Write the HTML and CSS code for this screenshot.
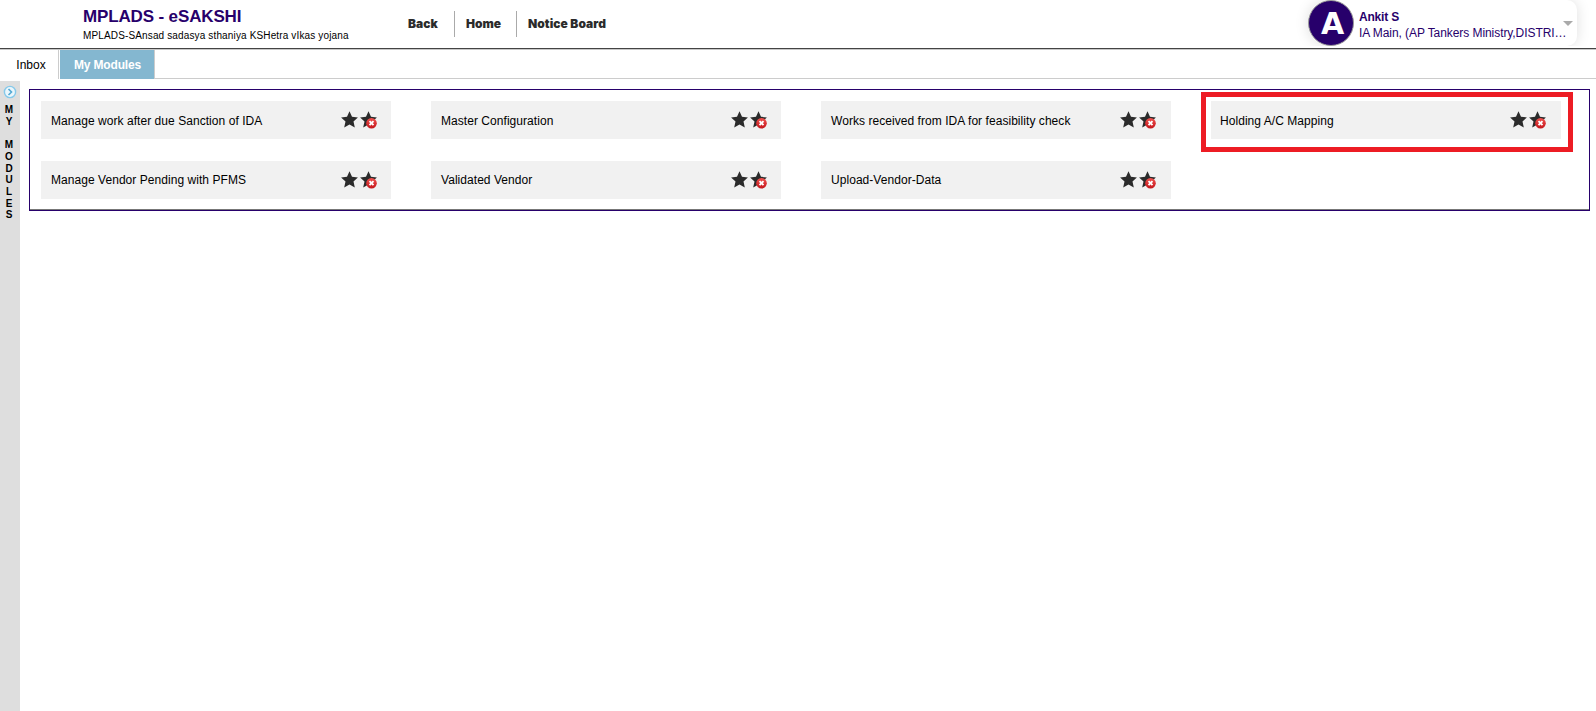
FILE: index.html
```html
<!DOCTYPE html>
<html lang="en">
<head>
<meta charset="utf-8">
<title>MPLADS - eSAKSHI</title>
<link rel="stylesheet" href="styles.css">
</head>
<body>
<svg class="defs" width="0" height="0">
  <defs>
    <linearGradient id="badge" x1="0" y1="0" x2="0" y2="1"><stop offset="0" stop-color="#f0524f"/><stop offset="1" stop-color="#c4161c"/></linearGradient>
    <symbol id="star" viewBox="0 0 17 17"><path d="M8.5.2l2.5 5.6 5.9.6-4.4 4 1.3 6-5.3-3-5.3 3 1.3-6-4.4-4 5.9-.6z" fill="#2b2b2b"/></symbol>
    <symbol id="unstar" viewBox="0 0 17 18"><path d="M8.5.2l2.5 5.6 5.9.6-4.4 4 1.3 6-5.3-3-5.3 3 1.3-6-4.4-4 5.9-.6z" fill="#2b2b2b"/><circle cx="11.5" cy="12.2" r="5.3" fill="url(#badge)"/><path d="M9.5 10.2l4 4m0-4l-4 4" stroke="#fff" stroke-width="1.9"/></symbol>
  </defs>
</svg>
<header class="header">
  <div class="brand">
    <h1 class="brand-title">MPLADS - eSAKSHI</h1>
    <p class="brand-sub">MPLADS-SAnsad sadasya sthaniya KSHetra vIkas yojana</p>
  </div>
  <nav class="nav"><a class="nav-link back">Back</a><a class="nav-link home">Home</a><a class="nav-link notice">Notice Board</a></nav>
  <div class="user">
    <div class="avatar">A</div>
    <div class="user-text"><div class="user-name">Ankit S</div><div class="user-role">IA Main, (AP Tankers Ministry,DISTRI…</div></div>
    <span class="caret"></span>
  </div>
</header>
<div class="tabs"><div class="tab inbox">Inbox</div><div class="tab modules">My Modules</div><div class="tab-rest"></div></div>
<div class="body">
  <aside class="side">
    <svg class="expand" width="14" height="14" viewBox="0 0 14 14"><circle cx="7" cy="7" r="5.6" fill="#eaf6fc" stroke="#86c9ea" stroke-width="1.4"/><path d="M5.5 4l3 3-3 3" fill="none" stroke="#53a9d4" stroke-width="1.6"/></svg>
    <div class="side-label"><span>M</span><span>Y</span><span class="gap"></span><span>M</span><span>O</span><span>D</span><span>U</span><span>L</span><span>E</span><span>S</span></div>
  </aside>
  <main class="panel">
    <div class="card top"><span>Manage work after due Sanction of IDA</span><div class="icons"><svg width="17" height="17"><use href="#star"/></svg><svg width="17" height="18"><use href="#unstar"/></svg></div></div>
    <div class="card top"><span>Master Configuration</span><div class="icons"><svg width="17" height="17"><use href="#star"/></svg><svg width="17" height="18"><use href="#unstar"/></svg></div></div>
    <div class="card top"><span>Works received from IDA for feasibility check</span><div class="icons shift"><svg width="17" height="17"><use href="#star"/></svg><svg width="17" height="18"><use href="#unstar"/></svg></div></div>
    <div class="card top marked"><span>Holding A/C Mapping</span><div class="icons shift"><svg width="17" height="17"><use href="#star"/></svg><svg width="17" height="18"><use href="#unstar"/></svg></div></div>
    <div class="card"><span>Manage Vendor Pending with PFMS</span><div class="icons"><svg width="17" height="17"><use href="#star"/></svg><svg width="17" height="18"><use href="#unstar"/></svg></div></div>
    <div class="card"><span>Validated Vendor</span><div class="icons"><svg width="17" height="17"><use href="#star"/></svg><svg width="17" height="18"><use href="#unstar"/></svg></div></div>
    <div class="card"><span>Upload-Vendor-Data</span><div class="icons shift"><svg width="17" height="17"><use href="#star"/></svg><svg width="17" height="18"><use href="#unstar"/></svg></div></div>
  </main>
</div>
</body>
</html>
```
FILE: styles.css
```css
*, *::after { box-sizing: border-box; margin: 0; }
body { height: 711px; display: flex; flex-direction: column; overflow: hidden; background: #fff; color: #000; font: 12px/14px "Liberation Sans", Arial, sans-serif; }
.defs { position: absolute; }
.header { height: 50px; flex: none; display: flex; border-bottom: 1px solid #c8c8c8; box-shadow: inset 0 -1px #444; }
.brand { width: 408px; padding: 7px 0 0 83px; white-space: nowrap; }
.brand-title { font-size: 17px; line-height: 20px; font-weight: 700; letter-spacing: -.14px; color: #27006b; }
.brand-sub { margin-top: 2px; font-size: 10px; line-height: 13px; letter-spacing: .14px; }
.nav { display: flex; padding-top: 11px; flex: 1; }
.nav-link { height: 26px; line-height: 26px; font-family: Inter, sans-serif; font-weight: 900; font-size: 12px; color: #2b2b2b; white-space: nowrap; }
.back { width: 47px; border-right: 1px solid #aaa; }
.home { width: 62px; padding-left: 11px; border-right: 1px solid #aaa; }
.notice { padding-left: 11px; letter-spacing: .05px; }
.user { width: 269px; height: 46px; margin-right: 19px; display: flex; border-radius: 22px 10px 10px 22px; box-shadow: 0 0 14px rgba(0,0,0,.13); clip-path: inset(0 -20px 0 -20px); }
.avatar { width: 46px; height: 46px; flex: none; border-radius: 50%; background: #27006b; border: 1px solid #999; color: #fff; font: 700 30px/46px "DejaVu Sans", sans-serif; text-align: center; padding-left: 3px; }
.user-text { width: 209px; flex: none; padding: 10px 0 0 5px; color: #27006b; white-space: nowrap; }
.user-name { font-weight: 700; letter-spacing: -.2px; }
.user-role { margin-top: 2px; letter-spacing: -.07px; }
.caret { width: 0; height: 0; margin-top: 21px; border: 5px solid transparent; border-top-color: #aaa; border-bottom: 0; }
.tabs { height: 29px; flex: none; display: flex; }
.tab { height: 29px; line-height: 30px; text-align: center; }
.inbox { width: 59px; border-right: 1px solid #ccc; margin-right: 1px; padding-left: 4px; }
.modules { width: 95px; background: #84b7d0; border-right: 1px solid #ccc; color: #fff; font-weight: 700; letter-spacing: -.15px; padding-left: 1px; }
.tab-rest { flex: 1; border-bottom: 1px solid #ccc; }
.body { flex: 1; display: flex; align-items: flex-start; padding-top: 2px; }
.side { width: 20px; height: 630px; background: #dedede; padding: 4px 0 0 3px; }
.expand { display: block; }
.side-label { margin-top: 5px; width: 12px; display: flex; flex-direction: column; align-items: center; font-weight: 700; font-size: 10px; line-height: 11.7px; }
.side-label .gap { height: 11.7px; }
.side-label span { flex: none; }
.panel { width: 1561px; height: 122px; margin: 8px 0 0 9px; padding: 11px 0 0 11px; border: 1px solid #27006b; box-shadow: inset 0 -1px #777; display: grid; grid-template-columns: repeat(4, 350px); grid-auto-rows: 38px; gap: 22px 40px; }
.card { position: relative; display: flex; justify-content: space-between; padding: 0 14px 0 10px; line-height: 38px; letter-spacing: .05px; background: #f1f1f1; white-space: nowrap; }
.card.top { line-height: 40px; }
.icons { display: flex; gap: 2px; padding-top: 10px; height: 38px; }
.icons.shift { margin-right: 1px; }
.marked { padding-left: 9px; }
.marked::after { content: ""; position: absolute; left: -10px; top: -9px; width: 372px; height: 60px; border: 5px solid #ed1c24; }
```
